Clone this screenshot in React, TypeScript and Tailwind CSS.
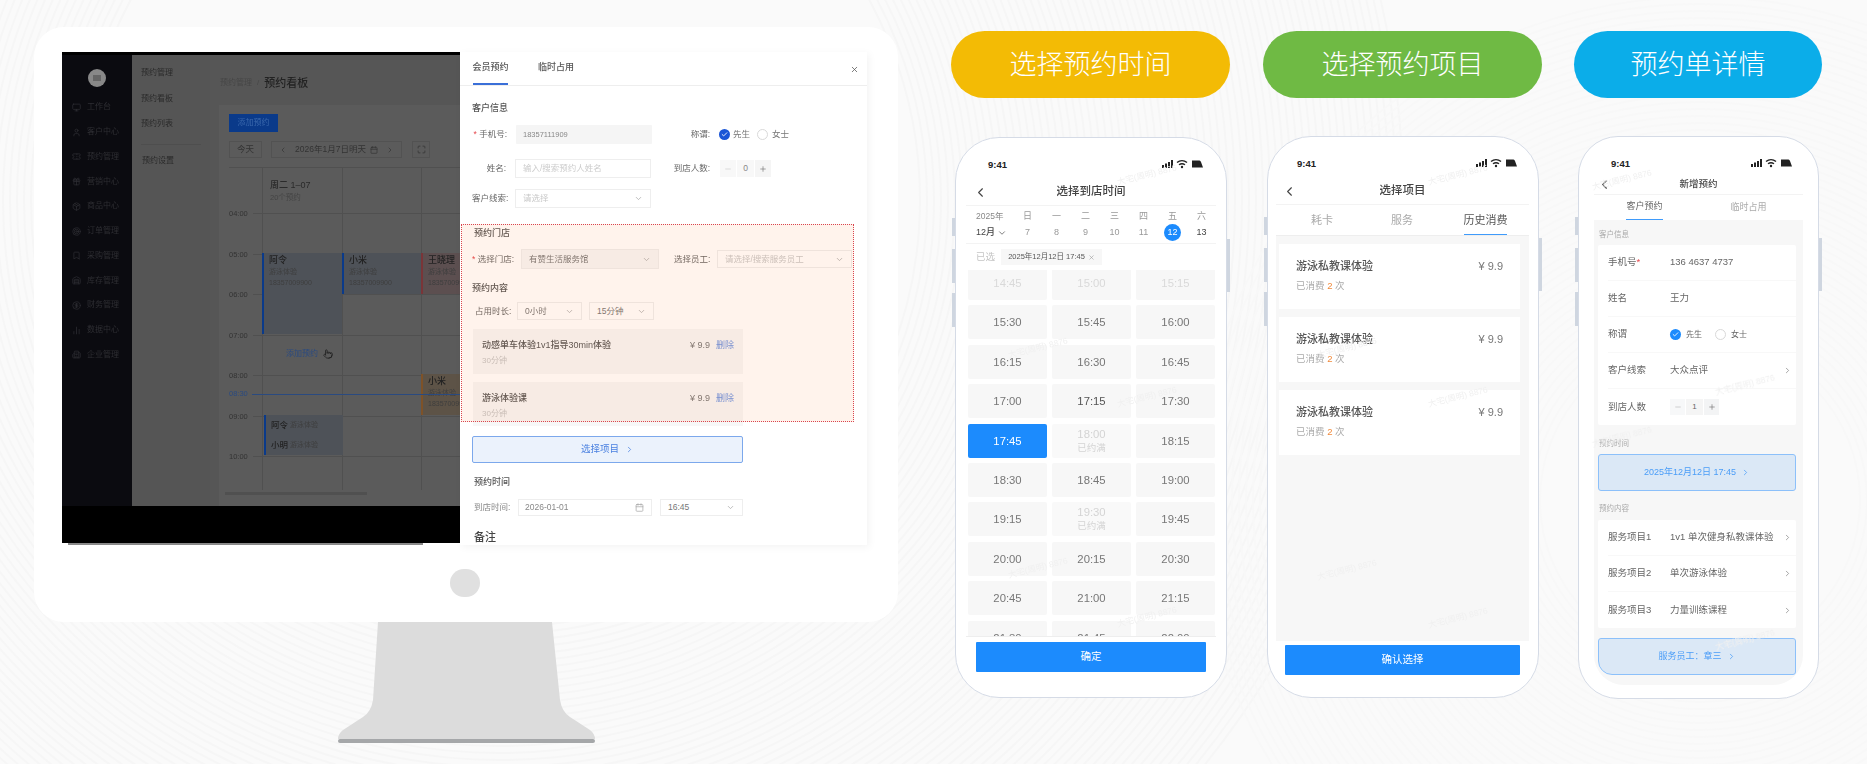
import type { ReactNode } from "react";
import {
  Bookmark,
  Calendar,
  Check,
  ChevronDown,
  ChevronLeft,
  ChevronRight,
  CircleDollarSign,
  Building2,
  ChartNoAxesColumn,
  Gift,
  Maximize,
  Minus,
  Monitor,
  Package,
  Plus,
  Pointer,
  Target,
  Ticket,
  User,
  Warehouse,
  X,
} from "lucide-react";

const menu = [
  { label: "工作台", Icon: Monitor },
  { label: "客户中心", Icon: User },
  { label: "预约管理", Icon: Ticket },
  { label: "营销中心", Icon: Gift },
  { label: "商品中心", Icon: Package },
  { label: "订单管理", Icon: Target },
  { label: "采购管理", Icon: Bookmark },
  { label: "库存管理", Icon: Warehouse },
  { label: "财务管理", Icon: CircleDollarSign },
  { label: "数据中心", Icon: ChartNoAxesColumn },
  { label: "企业管理", Icon: Building2 },
];

const hours = ["04:00", "05:00", "06:00", "07:00", "08:00", "09:00", "10:00"];

const days = [
  ["日", "7"],
  ["一", "8"],
  ["二", "9"],
  ["三", "10"],
  ["四", "11"],
  ["五", "12"],
  ["六", "13"],
];

type Slot = { time: string; state?: "past" | "full" | "active" | "bold" };

const slots: Slot[] = [
  { time: "14:45", state: "past" },
  { time: "15:00", state: "past" },
  { time: "15:15", state: "past" },
  { time: "15:30" },
  { time: "15:45" },
  { time: "16:00" },
  { time: "16:15" },
  { time: "16:30" },
  { time: "16:45" },
  { time: "17:00" },
  { time: "17:15", state: "bold" },
  { time: "17:30" },
  { time: "17:45", state: "active" },
  { time: "18:00", state: "full" },
  { time: "18:15" },
  { time: "18:30" },
  { time: "18:45" },
  { time: "19:00" },
  { time: "19:15" },
  { time: "19:30", state: "full" },
  { time: "19:45" },
  { time: "20:00" },
  { time: "20:15" },
  { time: "20:30" },
  { time: "20:45" },
  { time: "21:00" },
  { time: "21:15" },
  { time: "21:30" },
  { time: "21:45" },
  { time: "22:00" },
];

const watermarks = [
  "left-[1147px] top-[175px]",
  "left-[1038px] top-[348px]",
  "left-[1147px] top-[397px]",
  "left-[1038px] top-[568px]",
  "left-[1147px] top-[617px]",
  "left-[1458px] top-[175px]",
  "left-[1347px] top-[348px]",
  "left-[1458px] top-[397px]",
  "left-[1347px] top-[570px]",
  "left-[1458px] top-[618px]",
  "left-[1622px] top-[180px]",
  "left-[1745px] top-[385px]",
  "left-[1622px] top-[437px]",
  "left-[1745px] top-[640px]",
];

function Backdrop() {
  const left = Array.from({ length: 70 }, (_, i) => 420 + i * 7);
  const right = Array.from({ length: 50 }, (_, i) => 160 + i * 7);
  return (
    <svg className="absolute inset-0" width="1867" height="764" fill="none">
      {left.map((r) => (
        <circle key={r} cx="500" cy="200" r={r} stroke="#f6f6f6" strokeWidth="2" />
      ))}
      {right.map((r) => (
        <circle key={r} cx="1700" cy="500" r={r} stroke="#f8f8f8" strokeWidth="2" />
      ))}
    </svg>
  );
}

function Select({ text, width, placeholder }: { text: string; width: string; placeholder?: boolean }) {
  return (
    <div className={`flex h-full items-center justify-between border border-[#eeeeee] bg-white pl-[7px] pr-[7px] ${width}`}>
      <span className={placeholder ? "text-[#c8c8c8]" : "text-[#777777]"}>{text}</span>
      <ChevronDown className="h-[9px] w-[9px] text-[#aaaaaa]" />
    </div>
  );
}

function Radio({ on, blue }: { on?: boolean; blue: string }) {
  return (
    <span className={`flex h-[11px] w-[11px] items-center justify-center rounded-full ${on ? blue : "border border-[#d9d9d9] bg-white"}`}>
      {on && <Check className="h-[7px] w-[7px] text-white" strokeWidth={3} />}
    </span>
  );
}

function ProjectCard({ name, height, mt }: { name: string; height: string; mt: string }) {
  return (
    <div className={`ml-[1px] flex w-[270px] flex-col bg-[#f7f7f7] pl-[9px] pr-[9px] pt-[10px] ${height} ${mt}`}>
      <div className="flex items-center justify-between text-[#555555]">
        <span className="text-[9px] font-medium">{name}</span>
        <span className="flex gap-[6px] text-[9px]">
          <span className="text-[#777777]">¥ 9.9</span>
          <span className="text-[#6b92e0]">删除</span>
        </span>
      </div>
      <div className="mt-[2px] text-[8px] text-[#c4c4c4]">30分钟</div>
    </div>
  );
}

function BookingPanel() {
  return (
    <div className="relative h-[493px] w-[407px] overflow-hidden whitespace-nowrap bg-white text-[8.5px] text-[#666666] shadow-[2px_2px_8px_rgba(0,0,0,0.05)] blur-[0.3px]">
      <div className="flex h-[34px] border-b border-[#eeeeee] pl-[13px] text-[9px] font-medium text-[#555555]">
        <div className="flex h-[33px] w-[35px] items-center justify-center border-b-2 border-[#3a6fd8]">会员预约</div>
        <div className="ml-[30px] flex h-[32px] items-center">临时占用</div>
        <X className="ml-auto mr-[8px] mt-[13px] h-[9px] w-[9px] text-[#555555]" />
      </div>

      <div className="flex flex-col pl-[12px]">
        <div className="mt-[16px] h-[12px] text-[9px] font-medium leading-[12px] text-[#555555]">客户信息</div>

        <div className="mt-[11px] flex h-[19px] items-center">
          <div className="w-[35px] text-right">
            <span className="text-[#e5484d]">* </span>手机号:
          </div>
          <div className="ml-[9px] flex h-full w-[136px] items-center rounded-[1px] bg-[#f5f5f5] pl-[7px] text-[7.5px] text-[#888888]">18357111909</div>
          <div className="w-[58px] text-right">称谓:</div>
          <div className="ml-[9px] flex items-center text-[#777777]">
            <Radio on blue="bg-[#1a56d6]" />
            <span className="ml-[3px]">先生</span>
            <span className="ml-[7px]"><Radio blue="" /></span>
            <span className="ml-[4px]">女士</span>
          </div>
        </div>

        <div className="mt-[15px] flex h-[19px] items-center">
          <div className="w-[34px] text-right">姓名:</div>
          <div className="ml-[9px] flex h-full w-[136px] items-center border border-[#eeeeee] pl-[7px] text-[#cccccc]">输入/搜索预约人姓名</div>
          <div className="w-[59px] text-right">到店人数:</div>
          <div className="ml-[10px] flex h-[17px] gap-[1px]">
            <span className="flex w-[16px] items-center justify-center bg-[#f8f8f8]"><Minus className="h-[8px] w-[8px] text-[#cccccc]" /></span>
            <span className="flex w-[17px] items-center justify-center bg-[#f8f8f8] text-[#888888]">0</span>
            <span className="flex w-[16px] items-center justify-center bg-[#f5f5f5]"><Plus className="h-[8px] w-[8px] text-[#777777]" /></span>
          </div>
        </div>

        <div className="mt-[11px] flex h-[19px] items-center">
          <div className="w-[34px] text-right">客户线索:</div>
          <div className="ml-[9px] h-full"><Select text="请选择" width="w-[136px]" placeholder /></div>
        </div>

        <div className="mt-[19px] ml-[2px] h-[12px] text-[9px] font-medium leading-[12px] text-[#555555]">预约门店</div>

        <div className="mt-[11px] flex h-[18px] items-center">
          <div className="w-[41px] text-right">
            <span className="text-[#e5484d]">* </span>选择门店:
          </div>
          <div className="ml-[9px] flex h-full w-[136px] items-center justify-between bg-[#f7f7f7] pl-[7px] pr-[7px] text-[#777777] outline outline-[#eeeeee]">
            有赞生活服务馆
            <ChevronDown className="h-[9px] w-[9px] text-[#aaaaaa]" />
          </div>
          <div className="ml-[16px] w-[34px]">选择员工:</div>
          <div className="ml-[9px] h-full"><Select text="请选择/搜索服务员工" width="w-[135px]" placeholder /></div>
        </div>

        <div className="mt-[14px] h-[12px] text-[9px] font-medium leading-[12px] text-[#555555]">预约内容</div>

        <div className="mt-[8px] flex h-[18px] items-center">
          <div className="ml-[3px] w-[34px]">占用时长:</div>
          <div className="ml-[8px] h-full"><Select text="0小时" width="w-[65px]" /></div>
          <div className="ml-[7px] h-full"><Select text="15分钟" width="w-[65px]" /></div>
        </div>

        <ProjectCard name="动感单车体验1v1指导30min体验" height="h-[45px]" mt="mt-[9px]" />
        <ProjectCard name="游泳体验课" height="h-[44px]" mt="mt-[8px]" />

        <div className="mt-[10px] flex h-[27px] w-[271px] items-center justify-center gap-[6px] rounded-[2px] border border-[#7ca8ec] bg-[#ebf2fc] text-[9.5px] text-[#4a80e0]">
          选择项目
          <ChevronRight className="h-[9px] w-[9px]" />
        </div>

        <div className="mt-[13px] ml-[2px] h-[12px] text-[9px] font-medium leading-[12px] text-[#555555]">预约时间</div>

        <div className="mt-[11px] flex h-[17px] items-center">
          <div className="ml-[2px] w-[35px] text-[#888888]">到店时间:</div>
          <div className="ml-[9px] flex h-full w-[134px] items-center justify-between border border-[#eeeeee] pl-[6px] pr-[7px] text-[#888888]">
            2026-01-01
            <Calendar className="h-[9px] w-[9px] text-[#aaaaaa]" />
          </div>
          <div className="ml-[8px] h-full"><Select text="16:45" width="w-[83px]" /></div>
        </div>

        <div className="mt-[14px] ml-[2px] text-[11px] font-medium leading-[14px] text-[#444444]">备注</div>
      </div>

      <div className="absolute left-[1px] top-[172px] h-[198px] w-[393px] border border-dotted border-[#d9454f] bg-[rgba(255,120,40,0.09)]" />
    </div>
  );
}

function EventCard({ place, name, phone, tone }: { place: string; name: string; phone: string; tone: string }) {
  return (
    <div className={`absolute border-l-2 pl-[5px] pt-[2px] leading-[11px] ${place} ${tone}`}>
      <div className="text-[9px] font-medium text-[#222222]">{name}</div>
      <div className="text-[7px] text-[#3e3e3e]">游泳体验</div>
      <div className="text-[7px] text-[#3e3e3e]">{phone}</div>
    </div>
  );
}

function Dashboard() {
  return (
    <div className="flex h-[451px] overflow-hidden whitespace-nowrap">
      <div className="w-[70px] shrink-0 bg-[#0b0b10] text-[8px] text-[#2e2e33]">
        <div className="mx-auto mt-[14px] flex h-[18px] w-[18px] items-center justify-center rounded-full bg-[#888888]">
          <span className="h-[6px] w-[8px] bg-[#666666]" />
        </div>
        <div className="mt-[8px] flex flex-col">
          {menu.map(({ label, Icon }) => (
            <div key={label} className="flex h-[24.75px] items-center pl-[10px]">
              <Icon className="h-[9px] w-[9px]" />
              <span className="ml-[6px]">{label}</span>
            </div>
          ))}
        </div>
      </div>

      <div className="w-[78px] shrink-0 bg-[#555555] pl-[9px] text-[8px] text-[#2a2a2a]">
        <div className="mt-[12px] h-[25.5px]">预约管理</div>
        <div className="h-[25.5px]">预约看板</div>
        <div className="h-[26px]">预约列表</div>
        <div className="w-[60px] border-t border-[#4e4e4e]" />
        <div className="ml-[1px] mt-[10px]">预约设置</div>
      </div>

      <div className="w-[250px] shrink-0 overflow-hidden bg-[#565656]">
        <div className="flex h-[50px] items-center pl-[10px] pt-[6px]">
          <span className="text-[8px] text-[#464646]">预约管理</span>
          <span className="mx-[5px] text-[8px] text-[#464646]">/</span>
          <span className="text-[11px] font-medium text-[#222222]">预约看板</span>
        </div>

        <div className="ml-[9px] h-[401px] bg-[#5b5b5b] pl-[10px]">
          <div className="pt-[9px]">
            <div className="flex h-[18px] w-[49px] items-center justify-center bg-[#0a3a8a] text-[8px] text-[#3a68ac]">添加预约</div>
          </div>

          <div className="mt-[9px] flex h-[17px] text-[8.5px] text-[#333333]">
            <div className="flex w-[33px] items-center justify-center border border-[#525252]">今天</div>
            <div className="ml-[9px] flex w-[131px] items-center justify-between border border-[#525252] px-[7px]">
              <ChevronLeft className="h-[8px] w-[8px]" />
              <span className="flex items-center gap-[4px]">2026年1月7日明天 <Calendar className="h-[8px] w-[8px]" /></span>
              <ChevronRight className="h-[8px] w-[8px]" />
            </div>
            <div className="ml-[10px] flex w-[18px] items-center justify-center border border-[#525252]">
              <Maximize className="h-[9px] w-[9px]" />
            </div>
          </div>

          <div className="relative mt-[9px] h-[323px] border-t border-[#505050]">
            <div className="absolute bottom-0 left-[33px] top-0 flex">
              <div className="w-[79.5px] border-l border-[#505050]" />
              <div className="w-[79.5px] border-l border-[#505050]" />
              <div className="w-[79.5px] border-l border-[#505050]" />
            </div>

            <div className="absolute left-[41px] top-[11px] text-[9px] font-medium text-[#2a2a2a]">周二 1–07</div>
            <div className="absolute left-[41px] top-[24px] text-[7.5px] text-[#444444]">20个预约</div>

            <div className="pt-[45px]">
              {hours.map((h) => (
                <div key={h} className="relative ml-[24px] h-[40.5px] border-t border-[#505050]">
                  <span className="absolute -left-[24px] -top-[6px] text-[7.5px] leading-[11px] text-[#333333]">{h}</span>
                </div>
              ))}
            </div>

            <EventCard place="left-[33px] top-[85px] h-[81px] w-[80px]" name="阿令" phone="18357009900" tone="border-[#0a3a8a] bg-[#4e5258]" />
            <EventCard place="left-[113px] top-[85px] h-[41px] w-[79px]" name="小米" phone="18357009900" tone="border-[#0a3a8a] bg-[#4e5258]" />
            <EventCard place="left-[192px] top-[85px] h-[41px] w-[60px]" name="王晓理" phone="18357009900" tone="border-[#7a3538] bg-[#5c4f50]" />
            <EventCard place="left-[192px] top-[206px] h-[41px] w-[60px]" name="小米" phone="18357009900" tone="border-[#7e5228] bg-[#5d5347]" />

            <div className="absolute left-[57px] top-[180px] flex items-center gap-[5px] text-[8px] text-[#2a4a80]">
              添加预约
              <Pointer className="h-[10px] w-[10px] text-[#222222]" />
            </div>

            <div className="absolute left-0 top-[220px] text-[7.5px] leading-[11px] text-[#2a4a80]">08:30</div>
            <div className="absolute left-[23px] right-0 top-[226px] h-[1px] bg-[#2a4a80]" />

            <div className="absolute left-[35px] top-[247px] flex h-[20px] w-[79px] items-center gap-[2px] border-l-2 border-[#0a3a8a] bg-[#4e5258] pl-[5px] text-[7px] text-[#3e3e3e]">
              <span className="text-[8.5px] font-medium text-[#222222]">阿令</span> 游泳体验
            </div>
            <div className="absolute left-[35px] top-[267px] flex h-[20px] w-[79px] items-center gap-[2px] border-l-2 border-[#0a3a8a] bg-[#4e5258] pl-[5px] text-[7px] text-[#3e3e3e]">
              <span className="text-[8.5px] font-medium text-[#222222]">小明</span> 游泳体验
            </div>
          </div>

          <div className="-ml-[4px] mt-[2px] h-[3px] w-[142px] bg-[#505050]" />
        </div>
      </div>
    </div>
  );
}

function Computer() {
  return (
    <div className="w-[864px] shrink-0">
      <div className="h-[595px] rounded-[30px] bg-white pl-[28px] pt-[25px]">
        <div className="flex items-start">
          <div className="w-[398px] shrink-0">
            <div className="h-[491px] bg-black pt-[3px] blur-[0.3px]">
              <Dashboard />
            </div>
            <div className="ml-[6px] h-[2px] w-[355px] bg-[#8a8a8a]" />
          </div>
          <BookingPanel />
        </div>
        <div className="ml-[388px] mt-[24px] h-[28px] w-[30px] rounded-full bg-[#e0e0e0]" />
      </div>
      <svg className="mx-auto block" width="257" height="121" viewBox="0 0 257 121">
        <path d="M40 0H214L222 78Q224 90 232 95L252 108Q257 112 257 117H0Q0 112 5 108L25 95Q33 90 35 78Z" fill="#dcdcdc" />
        <rect x="0" y="117" width="257" height="4" rx="2" fill="#a5a7a9" />
      </svg>
    </div>
  );
}

function StatusBar({ pad, height }: { pad: string; height: string }) {
  return (
    <div className={`flex items-start justify-between pt-[19px] text-[9.5px] font-bold leading-[16px] text-[#222222] ${height} ${pad}`}>
      <span>9:41</span>
      <svg className="mt-[2px]" width="42" height="10" viewBox="0 0 42 10" fill="#222222">
        <rect x="0" y="6" width="2" height="3" />
        <rect x="3" y="4.5" width="2" height="4.5" />
        <rect x="6" y="3" width="2" height="6" />
        <rect x="9" y="1" width="2" height="8" />
        <path d="M15 3.5a8 8 0 0 1 10 0" fill="none" stroke="#222222" strokeWidth="1.4" />
        <path d="M17 5.8a5 5 0 0 1 6 0" fill="none" stroke="#222222" strokeWidth="1.4" />
        <circle cx="20" cy="8" r="1.2" />
        <path d="M30 1.5h7.5q1 0 1.5 1.5l2 5.5h-11z" />
      </svg>
    </div>
  );
}

function PhoneShell({ width, height, mt, radius, children }: { width: string; height: string; mt: string; radius: string; children: ReactNode }) {
  return (
    <div className={`relative ml-[4px] flex flex-col whitespace-nowrap border border-[#d5dbe6] bg-white blur-[0.25px] ${width} ${height} ${mt} ${radius}`}>
      <span className="absolute -left-[4px] top-[80px] h-[18px] w-[3px] bg-[#cfd6e0]" />
      <span className="absolute -left-[4px] top-[111px] h-[34px] w-[3px] bg-[#cfd6e0]" />
      <span className="absolute -left-[4px] top-[155px] h-[34px] w-[3px] bg-[#cfd6e0]" />
      <span className="absolute -right-[4px] top-[101px] h-[53px] w-[3px] bg-[#cfd6e0]" />
      {children}
    </div>
  );
}

function NavTitle({ title, size, height, back }: { title: string; size: string; height: string; back: string }) {
  return (
    <div className={`relative flex items-center justify-center border-b border-[#f3f3f3] font-medium text-[#444444] ${size} ${height}`}>
      {title}
      <ChevronLeft className={`absolute h-[15px] w-[15px] text-[#444444] ${back}`} strokeWidth={1.8} />
    </div>
  );
}

function TimePhone() {
  return (
    <PhoneShell width="w-[272px]" height="h-[561px]" mt="mt-[39px]" radius="rounded-[44px]">
      <StatusBar pad="pl-[32px] pr-[22px]" height="h-[41px]" />
      <div className="flex min-h-0 flex-1 flex-col px-[10px]">
        <NavTitle title="选择到店时间" size="text-[11.5px]" height="h-[27px]" back="left-[7px]" />

        <div className="grid h-[38px] grid-cols-[47px_repeat(7,29px)] border-b border-[#f3f3f3]">
          <div className="pl-[10px] pt-[5px] leading-[11px]">
            <div className="text-[8.5px] text-[#888888]">2025年</div>
            <div className="mt-[5px] flex items-center text-[9px] font-medium text-[#444444]">
              12月<ChevronDown className="ml-[2px] h-[10px] w-[10px] text-[#666666]" />
            </div>
          </div>
          {days.map(([week, date]) => (
            <div key={date} className="flex flex-col items-center pt-[5px] text-[9px] leading-[11px] text-[#999999]">
              <span>{week}</span>
              <span className={`mt-[2px] flex h-[17px] w-[17px] items-center justify-center rounded-full ${date === "12" ? "bg-[#1c8bfd] text-white" : date === "13" ? "font-medium text-[#444444]" : ""}`}>{date}</span>
            </div>
          ))}
        </div>

        <div className="flex h-[26px] items-center pl-[10px] text-[9.5px] text-[#c4c4c4]">
          已选
          <span className="ml-[6px] flex h-[16px] w-[101px] items-center justify-center gap-[3px] bg-[#f7f7f7] text-[7.5px] text-[#555555]">
            2025年12月12日 17:45 <X className="h-[7px] w-[7px] text-[#999999]" />
          </span>
        </div>

        <div className="relative min-h-0 flex-1 overflow-hidden">
          <div className="-mt-[4px] grid grid-cols-[79px_79px_79px] gap-x-[5px] gap-y-[5.4px] pl-[2px]">
            {slots.map(({ time, state }) => (
              <div
                key={time}
                className={`flex h-[34px] flex-col items-center justify-center rounded-[2px] text-[11.3px] leading-[14px] ${
                  state === "active"
                    ? "bg-[#1c8bfd] text-white"
                    : state === "past"
                      ? "bg-[#f7f7f7] text-[#d9d9d9]"
                      : state === "full"
                        ? "bg-[#f9f9f9] text-[#d4d4d4]"
                        : state === "bold"
                          ? "bg-[#f7f7f7] font-medium text-[#555555]"
                          : "bg-[#f7f7f7] text-[#777777]"
                }`}
              >
                {time}
                {state === "full" && <span className="text-[9.5px]">已约满</span>}
              </div>
            ))}
          </div>
        </div>

        <div className="h-[61px] border-t border-[#eeeeee] px-[10px] pt-[5px]">
          <div className="flex h-[30px] items-center justify-center rounded-[1px] bg-[#1c8bfd] text-[10.5px] text-white">确定</div>
        </div>
      </div>
    </PhoneShell>
  );
}

function HistoryCard({ mt }: { mt: string }) {
  return (
    <div className={`flex h-[65px] flex-col bg-white px-[17px] pt-[15px] ${mt}`}>
      <div className="flex items-center justify-between text-[11px] leading-[14px] text-[#555555]">
        <span className="font-medium">游泳私教课体验</span>
        <span className="text-[#777777]">¥ 9.9</span>
      </div>
      <div className="mt-[6px] text-[9.5px] leading-[13px] text-[#aaaaaa]">
        已消费 <span className="font-medium text-[#f08a3c]">2</span> 次
      </div>
    </div>
  );
}

function ProjectPhone() {
  return (
    <PhoneShell width="w-[272px]" height="h-[562px]" mt="mt-[38px]" radius="rounded-[44px]">
      <StatusBar pad="pl-[29px] pr-[20px]" height="h-[41px]" />
      <div className="flex min-h-0 flex-1 flex-col pl-[8px] pr-[9px]">
        <NavTitle title="选择项目" size="text-[11.5px]" height="h-[27px]" back="left-[6px]" />
        <div className="flex h-[31px] border-b border-[#eeeeee] pt-[1px] text-[11px] text-[#aaaaaa]">
          <div className="flex w-[92px] items-center justify-center">耗卡</div>
          <div className="flex w-[68px] items-center justify-center">服务</div>
          <div className="ml-[28px] flex w-[43px] items-center justify-center border-b-[1.5px] border-[#3f9bfb] text-[#555555]">历史消费</div>
        </div>
        <div className="h-[405px] bg-[#f7f7f7] pl-[3px] pr-[9px] pt-[8px]">
          <HistoryCard mt="" />
          <HistoryCard mt="mt-[8px]" />
          <HistoryCard mt="mt-[8px]" />
        </div>
        <div className="px-[9px] pt-[4px]">
          <div className="flex h-[30px] items-center justify-center rounded-[1px] bg-[#1c8bfd] text-[10.5px] text-white">确认选择</div>
        </div>
      </div>
    </PhoneShell>
  );
}

function InfoRow({ label, children }: { label: ReactNode; children: ReactNode }) {
  return (
    <div className="ml-[10px] flex h-[36px] items-center border-b border-[#f8f8f8] text-[9.5px] text-[#666666] last:border-b-0">
      <span className="w-[62px]">{label}</span>
      <div className="flex flex-1 items-center">{children}</div>
    </div>
  );
}

function Arrow() {
  return <ChevronRight className="ml-auto mr-[4px] h-[9px] w-[9px] text-[#888888]" />;
}

function DetailPhone() {
  return (
    <PhoneShell width="w-[241px]" height="h-[563px]" mt="mt-[38px]" radius="rounded-[40px]">
      <StatusBar pad="pl-[32px] pr-[25px]" height="h-[38px]" />
      <div className="flex min-h-0 flex-1 flex-col px-[15px]">
        <NavTitle title="新增预约" size="text-[9.5px]" height="h-[20px]" back="left-[3px]" />
        <div className="flex h-[25px] text-[9px] text-[#aaaaaa]">
          <div className="ml-[32px] flex w-[37px] items-center justify-center border-b-[1.5px] border-[#3f9bfb] text-[#666666]">客户预约</div>
          <div className="ml-[67px] flex w-[37px] items-center justify-center">临时占用</div>
        </div>
        <div className="h-[465px] overflow-hidden rounded-b-[30px] bg-[#f7f7f7] pl-[4px] pr-[7px]">
          <div className="flex h-[25px] items-center pl-[1px] pt-[4px] text-[7.5px] text-[#aaaaaa]">客户信息</div>
          <div className="rounded-[2px] bg-white">
            <InfoRow label={<>手机号<span className="text-[#e5484d]">*</span></>}>136 4637 4737</InfoRow>
            <InfoRow label="姓名">王力</InfoRow>
            <InfoRow label="称谓">
              <Radio on blue="bg-[#1c8bfd]" />
              <span className="ml-[5px] text-[8px]">先生</span>
              <span className="ml-[13px]"><Radio blue="" /></span>
              <span className="ml-[5px] text-[8px]">女士</span>
            </InfoRow>
            <InfoRow label="客户线索">大众点评<Arrow /></InfoRow>
            <InfoRow label="到店人数">
              <span className="flex h-[16px] gap-[1px]">
                <span className="flex w-[15px] items-center justify-center bg-[#f7f8f9]"><Minus className="h-[8px] w-[8px] text-[#bbbbbb]" /></span>
                <span className="flex w-[17px] items-center justify-center bg-[#f5f5f5] text-[8px]">1</span>
                <span className="flex w-[15px] items-center justify-center bg-[#f3f4f5]"><Plus className="h-[8px] w-[8px] text-[#777777]" /></span>
              </span>
            </InfoRow>
          </div>
          <div className="flex h-[29px] items-center pl-[1px] pt-[9px] text-[7.5px] text-[#aaaaaa]">预约时间</div>
          <div className="flex h-[37px] items-center justify-center gap-[5px] rounded-[3px] border border-[#8cc0fa] bg-[#dbe8f6] text-[9px] text-[#4a9df8]">
            2025年12月12日 17:45 <ChevronRight className="h-[9px] w-[9px]" />
          </div>
          <div className="flex h-[29px] items-center pl-[1px] pt-[7px] text-[7.5px] text-[#aaaaaa]">预约内容</div>
          <div className="rounded-[2px] bg-white">
            <InfoRow label="服务项目1">1v1 单次健身私教课体验<Arrow /></InfoRow>
            <InfoRow label="服务项目2">单次游泳体验<Arrow /></InfoRow>
            <InfoRow label="服务项目3">力量训练课程<Arrow /></InfoRow>
          </div>
          <div className="mt-[10px] flex h-[37px] items-center justify-center gap-[5px] rounded-[3px] rounded-bl-[14px] border border-[#8cc0fa] bg-[#dbe8f6] text-[9px] text-[#4a9df8]">
            服务员工：章三 <ChevronRight className="h-[9px] w-[9px]" />
          </div>
        </div>
      </div>
    </PhoneShell>
  );
}

function Pill({ text, tone, width }: { text: string; tone: string; width: string }) {
  return (
    <div className={`flex h-[67px] items-center justify-center rounded-full pt-[1px] text-[27px] font-light text-white ${tone} ${width}`}>{text}</div>
  );
}

export default function App() {
  return (
    <div className="relative h-[764px] w-[1867px] overflow-hidden bg-[#fafafa] font-['Liberation_Sans','Noto_Sans_CJK_SC',sans-serif]">
      <Backdrop />
      <div className="relative flex items-start pl-[34px] pt-[27px]">
        <Computer />
        <div className="ml-[53px] w-[279px] pt-[4px]">
          <Pill text="选择预约时间" tone="bg-[#f3bb05]" width="w-[279px]" />
          <TimePhone />
        </div>
        <div className="ml-[33px] w-[279px] pt-[4px]">
          <Pill text="选择预约项目" tone="bg-[#6fba44]" width="w-[279px]" />
          <ProjectPhone />
        </div>
        <div className="ml-[32px] w-[248px] pt-[4px]">
          <Pill text="预约单详情" tone="bg-[#0bade9]" width="w-[248px]" />
          <DetailPhone />
        </div>
      </div>
      {watermarks.map((place) => (
        <span key={place} className={`absolute -translate-x-1/2 -translate-y-1/2 -rotate-[14deg] whitespace-nowrap text-[8.5px] text-[#f0f0f0] ${place}`}>
          大宅(周明) 8876
        </span>
      ))}
    </div>
  );
}
